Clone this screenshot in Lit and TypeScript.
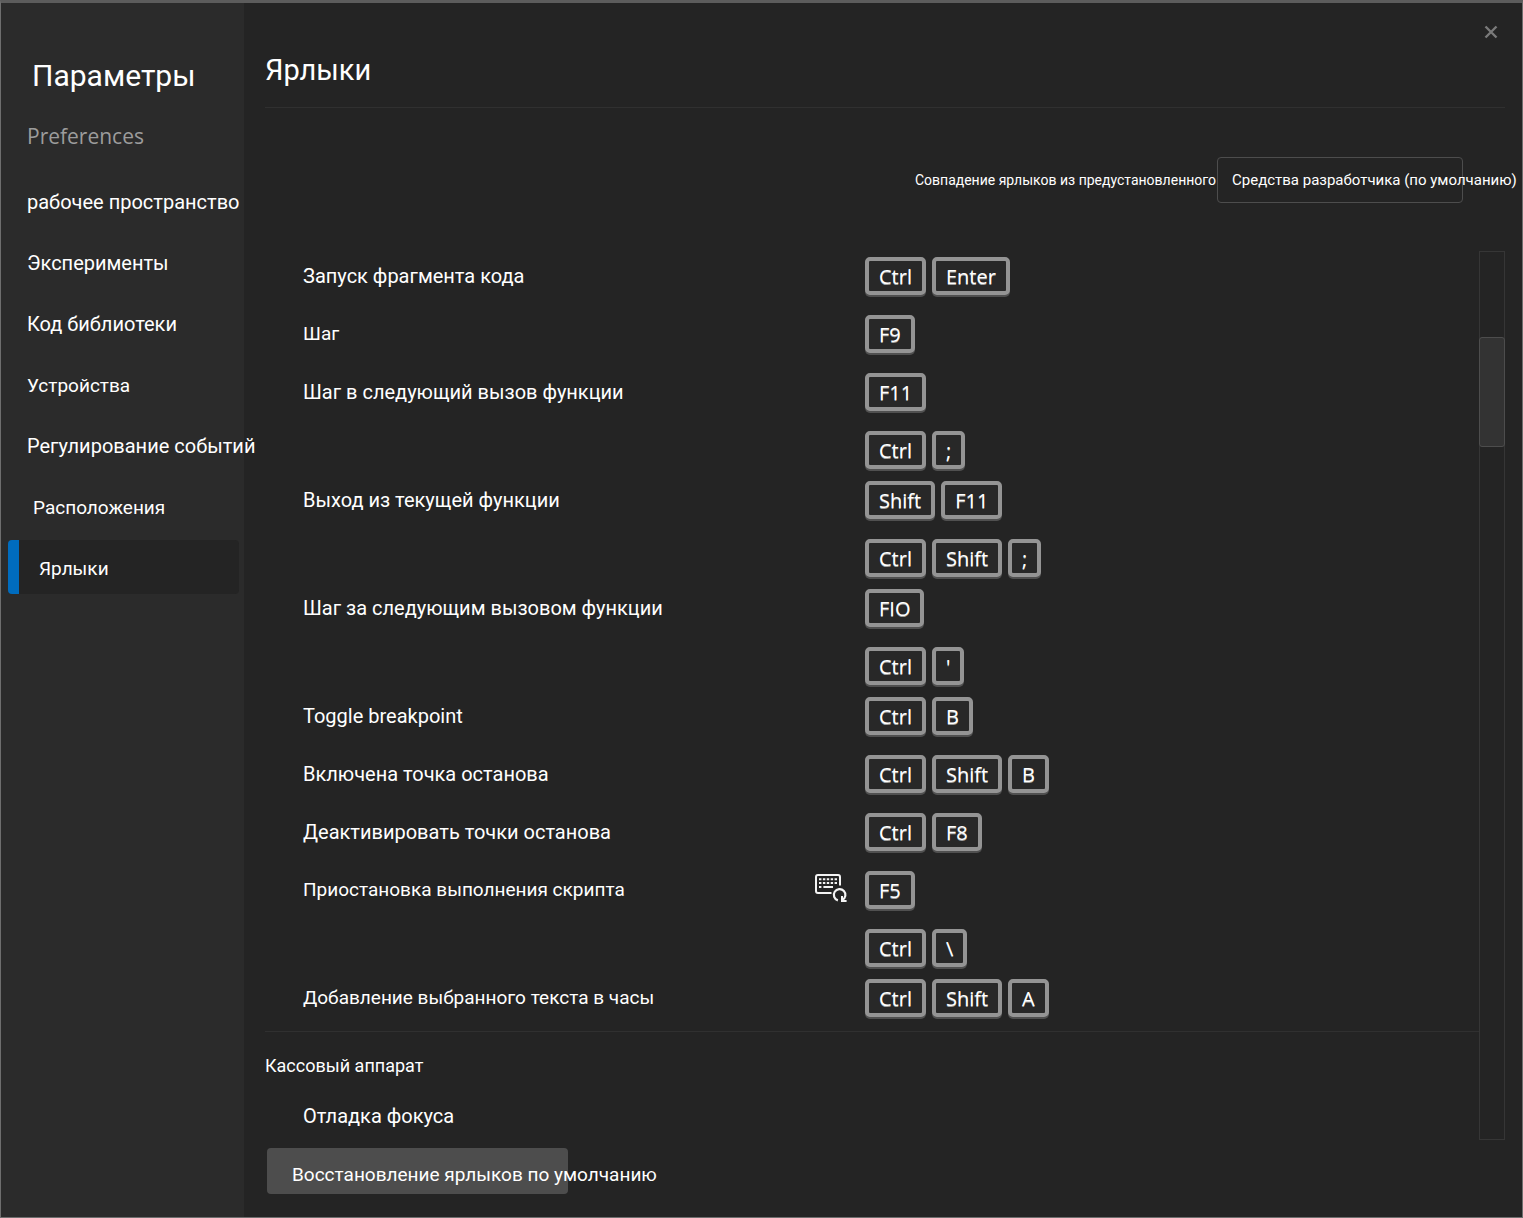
import { LitElement, html, css, nothing } from "lit";
import { customElement, property, state } from "lit/decorators.js";
import { classMap } from "lit/directives/class-map.js";

interface Page {
  id: string;
  label: string;
  inset?: boolean;
  compact?: boolean;
}

interface Shortcut {
  label: string;
  chords: string[][];
  edited?: boolean;
  compact?: boolean;
}

const PAGES: Page[] = [
  { id: "workspace", label: "рабочее пространство" },
  { id: "experiments", label: "Эксперименты" },
  { id: "library", label: "Код библиотеки" },
  { id: "devices", label: "Устройства", compact: true },
  { id: "throttling", label: "Регулирование событий" },
  { id: "locations", label: "Расположения", inset: true, compact: true },
  { id: "shortcuts", label: "Ярлыки", compact: true },
];

const SHORTCUTS: Shortcut[] = [
  { label: "Запуск фрагмента кода", chords: [["Ctrl", "Enter"]] },
  { label: "Шаг", chords: [["F9"]], compact: true },
  { label: "Шаг в следующий вызов функции", chords: [["F11"], ["Ctrl", ";"]] },
  { label: "Выход из текущей функции", chords: [["Shift", "F11"], ["Ctrl", "Shift", ";"]] },
  { label: "Шаг за следующим вызовом функции", chords: [["FIO"], ["Ctrl", "'"]] },
  { label: "Toggle breakpoint", chords: [["Ctrl", "B"]] },
  { label: "Включена точка останова", chords: [["Ctrl", "Shift", "B"]] },
  { label: "Деактивировать точки останова", chords: [["Ctrl", "F8"]] },
  { label: "Приостановка выполнения скрипта", chords: [["F5"], ["Ctrl", "\\"]], edited: true, compact: true },
  { label: "Добавление выбранного текста в часы", chords: [["Ctrl", "Shift", "A"]], compact: true },
];

@customElement("shortcut-row")
export class ShortcutRow extends LitElement {
  @property({ attribute: false }) shortcut!: Shortcut;

  static styles = css`
    :host {
      display: grid;
      grid-template-columns: 512px 50px 1fr;
      min-height: 48px;
    }
    .label {
      line-height: 38px;
      white-space: nowrap;
    }
    .label.compact {
      font-size: 19px;
    }
    .mark {
      display: flex;
      height: 34px;
      align-items: center;
    }
    .chords {
      display: grid;
      gap: 18px;
      align-content: start;
    }
    .chord {
      display: flex;
      gap: 6px;
    }
    kbd {
      box-sizing: border-box;
      height: 38px;
      margin-bottom: 2px;
      padding: 0 10px;
      border: 4px solid #949494;
      border-radius: 5px;
      background: #282828;
      box-shadow: 0 2px 0 #505050;
      color: #fff;
      font: 500 20px/32px "Open Sans", "Noto Sans", sans-serif;
      text-shadow: 0 1px 0 #a0a0a0;
    }
  `;

  render() {
    const { label, chords, edited, compact } = this.shortcut;
    return html`
      <div class=${classMap({ label: true, compact: !!compact })}>${label}</div>
      <div class="mark">
        ${edited
          ? html`<svg width="32" height="28" viewBox="0 0 32 28" fill="none" stroke="#f4f4f4" aria-hidden="true">
              <path d="M16.5 19H2.9Q1 19 1 17.1V2.9Q1 1 2.9 1h20.2Q25 1 25 2.9v8.6" stroke-width="2" />
              <path d="M4 5.2h18M4 9h18" stroke-width="2" stroke-dasharray="2.4 1.5" />
              <path d="M4 13h2.4M8.4 13h9.6" stroke-width="2" />
              <path d="M22.9 26.4a5.8 5.8 0 1 1 4.4-.4" stroke-width="2.2" />
              <path d="M27 22v5h4.6" stroke-width="2" />
            </svg>`
          : nothing}
      </div>
      <div class="chords">
        ${chords.map((keys) => html`<div class="chord">${keys.map((key) => html`<kbd>${key}</kbd>`)}</div>`)}
      </div>
    `;
  }
}

@customElement("app-root")
export class AppRoot extends LitElement {
  @state() private page = "shortcuts";

  static styles = css`
    :host {
      display: block;
      color: #fff;
      font: 20px/24px Roboto, "Liberation Sans", sans-serif;
    }
    .window {
      display: grid;
      grid-template-columns: 243px minmax(0, 1fr);
      box-sizing: border-box;
      min-height: 100vh;
      border: 1px solid #6e6e6e;
      border-top: 3px solid #5c5c5c;
      background: #242424;
    }
    .sidebar {
      background: #2b2b2b;
      padding: 53px 5px 0 7px;
    }
    h1 {
      margin: 0;
      padding-left: 24px;
      font-size: 30px;
      font-weight: 400;
      line-height: 40px;
    }
    .group {
      margin: 24px 0 22px;
      padding-left: 19px;
      color: #9c9c9c;
      font: 21px/32px "Open Sans", "Noto Sans", sans-serif;
    }
    nav {
      display: grid;
      grid-template-columns: minmax(0, 1fr);
      gap: 7px;
    }
    .item {
      box-sizing: border-box;
      height: 54px;
      padding: 2px 0 0 19px;
      border-radius: 4px;
      color: inherit;
      line-height: 52px;
      text-decoration: none;
      white-space: nowrap;
    }
    .item.inset {
      padding-left: 25px;
    }
    .item.compact {
      font-size: 19px;
      line-height: 54px;
    }
    .item.selected {
      padding-left: 20px;
      border-left: 11px solid #006cbe;
      background: #242424;
    }
    main {
      display: flex;
      flex-direction: column;
      padding: 14px 17px 23px 21px;
    }
    .close {
      align-self: flex-end;
      display: flex;
      width: 28px;
      height: 30px;
      padding: 0;
      border: 0;
      background: none;
      color: #7a7a7a;
      align-items: center;
      justify-content: center;
    }
    h2 {
      margin: 0;
      padding: 3px 0 17px;
      border-bottom: 1px solid #303030;
      font-size: 29px;
      font-weight: 400;
      line-height: 40px;
    }
    .preset {
      display: flex;
      justify-content: flex-end;
      align-items: center;
      margin: 49px 42px 48px 0;
      font-size: 14px;
    }
    .picker {
      box-sizing: border-box;
      display: flex;
      width: 246px;
      height: 46px;
      margin-left: 1px;
      border: 1px solid #4d4d4d;
      border-radius: 4px;
    }
    select {
      appearance: none;
      flex: none;
      width: max-content;
      padding: 0 0 0 14px;
      border: 0;
      background: none;
      color: #fff;
      font: 15px/24px Roboto, "Liberation Sans", sans-serif;
    }
    option {
      background: #242424;
    }
    .body {
      display: grid;
      grid-template-columns: minmax(0, 1fr) 26px;
      flex: 1;
    }
    .rows {
      display: grid;
      gap: 10px;
      padding: 6px 0 4px 38px;
    }
    .section {
      border-top: 1px solid #303030;
      padding-top: 22px;
    }
    h3 {
      margin: 0;
      font-size: 18px;
      font-weight: 400;
      line-height: 24px;
    }
    .entry {
      padding: 26px 0 0 38px;
    }
    .track {
      box-sizing: border-box;
      border: 1px solid #363636;
      padding-top: 85px;
    }
    .thumb {
      box-sizing: border-box;
      height: 110px;
      margin: 0 -1px;
      border: 1px solid #4d4d4d;
      border-radius: 3px;
      background: #333;
    }
    .restore {
      flex: none;
      width: 301px;
      height: 46px;
      margin: 8px 0 0 2px;
      padding: 8px 0 0 25px;
      border: 0;
      border-radius: 4px;
      background: #4d4d4d;
      color: #fff;
      font: inherit;
      font-size: 19px;
      text-align: left;
      white-space: nowrap;
    }
  `;

  private open(event: Event, id: string) {
    event.preventDefault();
    this.page = id;
  }

  render() {
    return html`
      <div class="window">
        <aside class="sidebar">
          <h1>Параметры</h1>
          <p class="group">Preferences</p>
          <nav>
            ${PAGES.map(
              ({ id, label, inset, compact }) => html`<a
                class=${classMap({ item: true, inset: !!inset, compact: !!compact, selected: id === this.page })}
                href="#${id}"
                @click=${(event: Event) => this.open(event, id)}
                >${label}</a
              >`,
            )}
          </nav>
        </aside>
        <main>
          <button class="close" type="button" aria-label="×">
            <svg width="14" height="14" viewBox="0 0 14 14" stroke="currentColor" stroke-width="2.4" aria-hidden="true">
              <path d="M1.5 1.5l11 11M12.5 1.5l-11 11" />
            </svg>
          </button>
          <h2>Ярлыки</h2>
          <div class="preset">
            <label for="preset">Совпадение ярлыков из предустановленного</label>
            <div class="picker">
              <select id="preset">
                <option>Средства разработчика (по умолчанию)</option>
              </select>
            </div>
          </div>
          <div class="body">
            <div>
              <div class="rows">
                ${SHORTCUTS.map((shortcut) => html`<shortcut-row .shortcut=${shortcut}></shortcut-row>`)}
              </div>
              <section class="section">
                <h3>Кассовый аппарат</h3>
                <div class="entry">Отладка фокуса</div>
              </section>
            </div>
            <div class="track"><div class="thumb"></div></div>
          </div>
          <button class="restore" type="button">Восстановление ярлыков по умолчанию</button>
        </main>
      </div>
    `;
  }
}
